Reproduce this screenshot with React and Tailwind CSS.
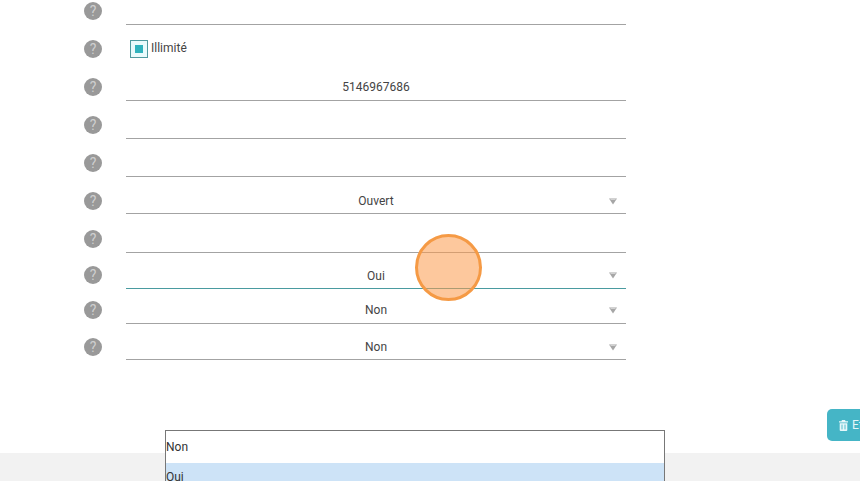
import React from "react";

const rows = [
  { h: "h-[25px]", type: "text", icon: "mb-[5px]" },
  { h: "h-[38px]", type: "check", icon: "mb-[5px]" },
  { h: "h-[38px]", type: "text", icon: "mb-[5px]", lead: "leading-[24px]", value: "5146967686" },
  { h: "h-[38px]", type: "text", icon: "mb-[5px]" },
  { h: "h-[38px]", type: "text", icon: "mb-[5px]" },
  { h: "h-[37px]", type: "select", icon: "mb-[4px]", lead: "leading-[26px]", caret: "top-[10px]", value: "Ouvert" },
  { h: "h-[39px]", type: "text", icon: "mb-[5px]" },
  { h: "h-[36px]", type: "select", icon: "mb-[5px]", lead: "leading-[26px]", caret: "top-[9px]", value: "Oui", active: true },
  { h: "h-[35px]", type: "select", icon: "mb-[5px]", lead: "leading-[24px]", caret: "top-[9px]", value: "Non" },
  { h: "h-[36px]", type: "select", icon: "mb-[4px]", lead: "leading-[26px]", caret: "top-[10px]", value: "Non" },
];

function HelpIcon({ className }) {
  return (
    <div className={`w-[18px] h-[18px] rounded-full bg-[#999999] text-[#cfcfcf] flex items-center justify-center text-[14px] leading-none shrink-0 ${className}`}>
      ?
    </div>
  );
}

function Caret({ className }) {
  return (
    <svg width="8" height="7" viewBox="0 0 8 7" className={`absolute right-[9px] ${className}`}>
      <path d="M0 0.5h8L4 6.5z" fill="#a6a6a6" />
      <path d="M1.5 1.5h5" stroke="#dcdcdc" strokeWidth="0.8" />
    </svg>
  );
}

function Field({ row }) {
  if (row.type === "check") {
    return (
      <div className="w-[500px] h-[26px] flex items-center pl-[4px] mb-[1px]">
        <div className="w-[18px] h-[18px] border border-[#4f9a9f] bg-[#e9fbfc] flex items-center justify-center">
          <div className="w-[8px] h-[8px] bg-[#2fb3bd]" />
        </div>
        <span className="ml-[3px] -mt-[3px] text-[12px] text-[#444444]">Illimité</span>
      </div>
    );
  }
  return (
    <div
      className={`relative w-[500px] h-[26px] border-b text-center text-[12px] text-[#444444] ${row.lead || ""} ${
        row.active ? "border-[#4a9ba0]" : "border-[#a3a3a3]"
      }`}
    >
      {row.value}
      {row.type === "select" && <Caret className={row.caret} />}
    </div>
  );
}

export default function App() {
  return (
    <div className="relative w-[860px] h-[481px] overflow-hidden bg-white font-['Roboto',sans-serif]">
      <div className="flex flex-col">
        {rows.map((row, i) => (
          <div key={i} className={`flex items-end pl-[84px] gap-[24px] ${row.h}`}>
            <HelpIcon className={row.icon} />
            <Field row={row} />
          </div>
        ))}
      </div>

      <div className="h-[93px] pt-[49px] pl-[827px]">
        <button className="h-[32px] w-[100px] flex items-center gap-[4px] pl-[12px] rounded-[5px] bg-[#45b5c6] text-[#e6f7fa] text-[12px] whitespace-nowrap">
          <svg width="9" height="11" viewBox="0 0 9 11">
            <path
              d="M3 0h3l.6 1.2H9v1.2H0V1.2h2.4zM.7 3.2h7.6V10a1 1 0 0 1-1 1H1.7a1 1 0 0 1-1-1z"
              fill="#e6f7fa"
            />
            <path d="M3 4.6v4.8M6 4.6v4.8" stroke="#45b5c6" strokeWidth="0.9" />
          </svg>
          Effacer
        </button>
      </div>

      <div className="h-[28px] bg-[#f2f2f2]" />

      {/* native select popup */}
      <div className="absolute left-[165px] top-[430px] w-[500px] h-[60px] border border-[#777777] bg-white text-[12px] text-[#333333]">
        <div className="h-[32px] leading-[32px]">Non</div>
        <div className="h-[32px] leading-[28px] bg-[#cde3f7]">Oui</div>
      </div>

      {/* touch indicator */}
      <div className="absolute left-[415px] top-[234px] w-[67px] h-[67px] rounded-full border-[3px] border-[#f59a45] bg-[#fb9a4d]/55" />
    </div>
  );
}
